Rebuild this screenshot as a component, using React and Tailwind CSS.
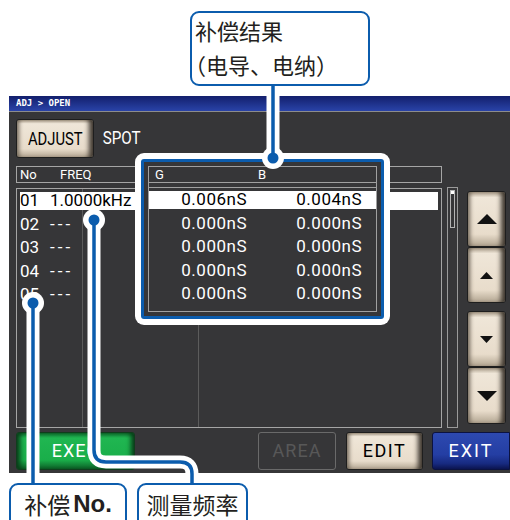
import React from 'react';

const rows = [
  { no: '01', freq: '1.0000kHz', g: '0.006nS', b: '0.004nS' },
  { no: '02', freq: '---', g: '0.000nS', b: '0.000nS' },
  { no: '03', freq: '---', g: '0.000nS', b: '0.000nS' },
  { no: '04', freq: '---', g: '0.000nS', b: '0.000nS' },
  { no: '05', freq: '---', g: '0.000nS', b: '0.000nS' },
];

// beige hardware-style key
const beigeKey =
  'bg-[linear-gradient(to_bottom,#a89b88_0%,#efe6d8_10%,#e8dccb_78%,#b3a692_100%)] shadow-[inset_5px_0_4px_-3px_#6f6557,inset_-7px_0_5px_-3px_#3e372f] border border-[#1e1e1e] rounded-[3px]';

const cjk = "font-['Noto_Sans_CJK_SC',sans-serif]";

const Arrow = ({ dir, big }) => {
  const w = big ? 20 : 13;
  const h = big ? 10 : 7;
  const pts = dir === 'up' ? `0,${h} ${w},${h} ${w / 2},0` : `0,0 ${w},0 ${w / 2},${h}`;
  return (
    <svg width={w} height={h}>
      <polygon points={pts} fill="#111" />
    </svg>
  );
};

const SideKey = ({ dir, big, className }) => (
  <div className={`${beigeKey} ${className} flex items-center justify-center`}>
    <Arrow dir={dir} big={big} />
  </div>
);

export default function App() {
  return (
    <div className="relative w-[510px] h-[520px] bg-white overflow-hidden font-['Roboto',sans-serif]">
      {/* instrument screen */}
      <div className="pt-[96px] pl-[9px]">
        <div className="w-[501px] h-[377px] bg-[#363638] flex flex-col">
          <div className="h-[16px] border-b border-[#8c8c8c] bg-[linear-gradient(to_bottom,#131f6c,#2943a8)] pl-[7px] text-white text-[9px] font-bold leading-[15px] font-['DejaVu_Sans_Mono',monospace]">
            ADJ &gt; OPEN
          </div>

          <div className="mt-[7px] flex items-center pl-[7px]">
            <div className={`${beigeKey} w-[78px] h-[39px] flex items-center justify-center`}>
              <span className="inline-block text-[18px] text-black scale-x-[0.82]">ADJUST</span>
            </div>
            <span className="ml-[4px] inline-block text-[19px] text-white scale-x-[0.8]">SPOT</span>
          </div>

          <div className="mt-[8px] flex items-start">
            {/* list */}
            <div className="ml-[7px] w-[426px]">
              <div className="h-[17px] border border-[#a5a5a5] flex items-center text-white text-[13px] leading-none">
                <span className="pl-[3px] w-[43px]">No</span>
                <span>FREQ</span>
              </div>
              <div className="relative mt-[5px] h-[240px] border border-[#a5a5a5]">
                <div className="absolute inset-0 flex">
                  <div className="w-[66px] border-r border-[#5c5c5c]" />
                  <div className="w-[116px] border-r border-[#5c5c5c]" />
                </div>
                <div className="relative px-[3px]">
                  {rows.map((r, i) => (
                    <div key={r.no} className="h-[23.5px] flex items-center">
                      <div
                        className={`h-[18px] w-full flex items-center text-[17px] leading-none ${
                          i === 0 ? 'bg-white text-black' : 'text-white'
                        }`}
                      >
                        <span className="w-[30px]">{r.no}</span>
                        <span className={r.freq === '---' ? 'tracking-[3px]' : ''}>{r.freq}</span>
                      </div>
                    </div>
                  ))}
                </div>
              </div>
            </div>

            {/* scroll bar */}
            <div className="ml-[5px] mt-[21px] w-[11px] h-[241px] border border-[#9a9a9a] p-[2px]">
              <div className="h-[38px] border border-[#b4b4b4]">
                <div className="h-[3px] bg-white" />
              </div>
            </div>

            {/* scroll keys */}
            <div className="ml-[9px] mt-[25px] w-[39px] flex flex-col">
              <SideKey dir="up" big className="h-[56px]" />
              <SideKey dir="up" className="h-[56px]" />
              <SideKey dir="down" className="h-[56px] mt-[8px]" />
              <SideKey dir="down" big className="h-[57px]" />
            </div>
          </div>

          {/* bottom keys */}
          <div className="mt-[4px] flex h-[38px] text-[18px] leading-none">
            <div className="ml-[7px] w-[119px] rounded-[3px] border border-[#103d1c] bg-[linear-gradient(to_bottom,#0f6b2d_0%,#20b651_14%,#1aae4a_75%,#0d5e27_100%)] shadow-[inset_6px_0_5px_-3px_#073a17,inset_-6px_0_5px_-3px_#073a17] flex items-center justify-center text-white tracking-[1px]">
              EXEC
            </div>
            <div className="ml-[123px] w-[78px] rounded-[3px] border border-[#6a6a6a] flex items-center justify-center text-[#585858] tracking-[1px]">
              AREA
            </div>
            <div className={`${beigeKey} ml-[10px] w-[77px] flex items-center justify-center text-black tracking-[1.5px]`}>
              EDIT
            </div>
            <div className="ml-[9px] flex-1 rounded-l-[3px] border border-[#0b1240] bg-[linear-gradient(to_bottom,#2d49b0_0%,#243ea3_60%,#172a80_85%,#0b1450_100%)] flex items-center justify-center text-white tracking-[2px]">
              EXIT
            </div>
          </div>
        </div>
      </div>

      {/* callout frame around G / B columns */}
      <div className="absolute left-[135px] top-[153px] w-[255px] h-[172px] rounded-[9px] bg-white p-[6px]">
        <div className="h-full border-[3px] border-[#0b5cad] rounded-[3px] bg-[#363638] p-[4px]">
          <div className="h-full border border-[#a0a0a0] flex flex-col">
            <div className="h-[16px] flex items-center text-white text-[13px] leading-none border-b border-[#a0a0a0]">
              <span className="pl-[6px] w-[109px]">G</span>
              <span>B</span>
            </div>
            <div className="h-[5px] border-b border-[#a0a0a0]" />
            {rows.map((r, i) => (
              <div key={r.no} className="h-[23.5px] flex items-center">
                <div
                  className={`h-[18px] w-full flex items-center text-[17px] leading-none tracking-[0.5px] ${
                    i === 0 ? 'bg-white text-black' : 'text-white'
                  }`}
                >
                  <span className="w-[98px] text-right">{r.g}</span>
                  <span className="w-[115px] text-right">{r.b}</span>
                </div>
              </div>
            ))}
          </div>
        </div>
      </div>

      {/* leader lines */}
      <svg className="absolute inset-0 pointer-events-none" width="510" height="520">
        <g stroke="#fff" strokeWidth="13" fill="none">
          <path d="M273 88 V158" />
          <path d="M33 303 V484" />
          <path d="M94 220 V450 Q94 462 106 462 H180 Q192 462 192 474 V484" />
        </g>
        <g fill="#fff">
          <circle cx="273" cy="158" r="11" />
          <circle cx="33" cy="303" r="11" />
          <circle cx="94" cy="220" r="11" />
        </g>
        <g stroke="#0b5cad" strokeWidth="3.5" fill="none">
          <path d="M273 86 V158" />
          <path d="M33 303 V484" />
          <path d="M94 220 V450 Q94 462 106 462 H180 Q192 462 192 474 V484" />
        </g>
        <g fill="#0b5cad">
          <circle cx="273" cy="158" r="5.5" />
          <circle cx="33" cy="303" r="5.5" />
          <circle cx="94" cy="220" r="5.5" />
        </g>
      </svg>

      {/* annotation labels */}
      <div className={`absolute left-[190px] top-[11px] w-[180px] h-[75px] border-[2.5px] border-[#0b5cad] rounded-[9px] bg-white pl-[3px] text-[22px] leading-[34px] text-[#231f20] ${cjk}`}>
        <div>补偿结果</div>
        <div className="-ml-[11px]">（电导、电纳）</div>
      </div>
      <div className={`absolute left-[9px] top-[483px] w-[118px] h-[50px] border-[2.5px] border-[#0b5cad] rounded-[9px] bg-white flex justify-center text-[23px] leading-[38px] text-[#231f20] ${cjk}`}>
        <span>补偿</span>
        <span className="ml-[3px] font-['Liberation_Sans',sans-serif] font-bold text-[24px]">No.</span>
      </div>
      <div className={`absolute left-[137px] top-[483px] w-[111px] h-[50px] border-[2.5px] border-[#0b5cad] rounded-[9px] bg-white flex justify-center text-[23px] leading-[38px] text-[#231f20] ${cjk}`}>
        测量频率
      </div>
    </div>
  );
}
